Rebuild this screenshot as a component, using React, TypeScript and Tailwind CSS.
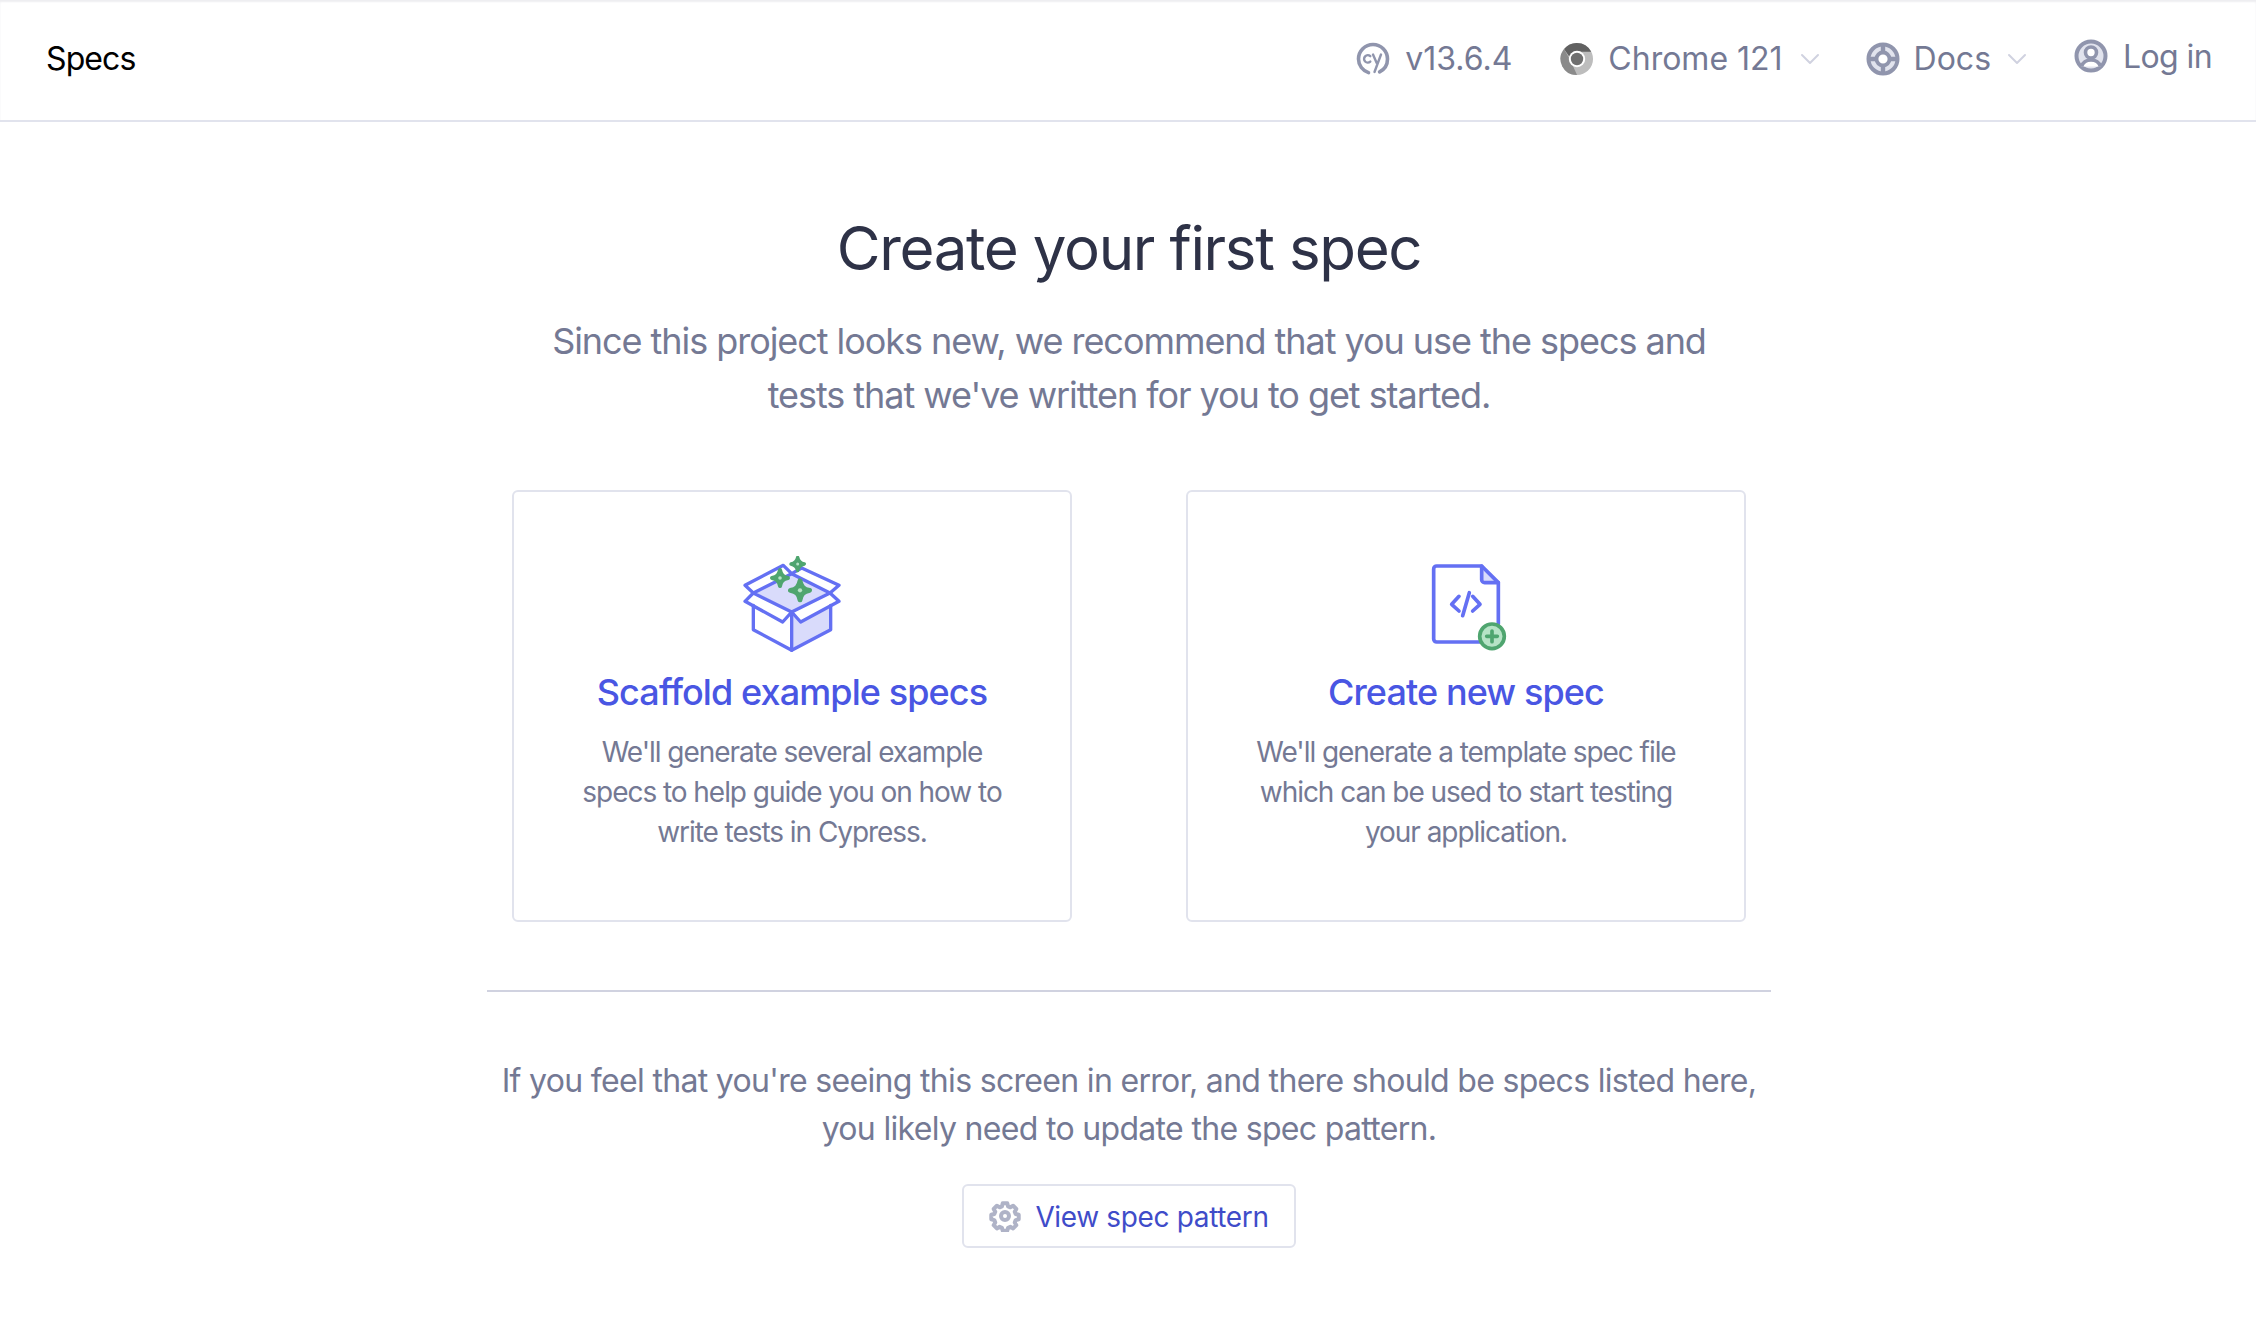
import React from 'react';
import { ChevronDown } from 'lucide-react';

const CypressIcon = () => (
  <svg width="34" height="34" viewBox="0 0 34 34" fill="none">
    <path d="M12.5 30.6C6.7 28.8 2.500 23.400 2.500 17 2.500 9 9 2.500 17 2.500S31.500 9 31.500 17c0 5.600-3.200 10.500-7.900 12.900" stroke="#9095ad" strokeWidth="3.600" strokeLinecap="round" />
    <path d="M14.300 14.200a3.700 3.700 0 1 0 0 5.400" stroke="#9095ad" strokeWidth="2.400" strokeLinecap="round" />
    <path d="M17 12.500l3.700 8.500M25 12.500l-6.500 17.500" stroke="#9095ad" strokeWidth="2.400" strokeLinecap="round" />
  </svg>
);

const ChromeIcon = () => (
  <svg width="34" height="34" viewBox="0 0 34 34">
    <circle cx="17" cy="17" r="16" fill="#bdbdbd" />
    <path d="M17 1a16 16 0 0 1 14.200 8.800H17a7.500 7.500 0 0 0-7.200 5.400L4 7a16 16 0 0 1 13-6z" fill="#616161" />
    <path d="M4 7l7 12.500L17 33A16 16 0 0 1 4 7z" fill="#8a8a8a" />
    <circle cx="17" cy="17" r="8.200" fill="#fff" />
    <circle cx="17" cy="17" r="6.200" fill="#6f6f6f" />
  </svg>
);

const DocsIcon = () => (
  <svg width="34" height="34" viewBox="0 0 34 34" fill="none">
    <circle cx="17" cy="17" r="14.500" fill="#e1e3ed" stroke="#9095ad" strokeWidth="4" />
    <path d="M17 2v30M2 17h30" stroke="#9095ad" strokeWidth="4.400" />
    <circle cx="17" cy="17" r="6.500" fill="#fff" stroke="#9095ad" strokeWidth="3.800" />
  </svg>
);

const UserIcon = () => (
  <svg width="34" height="34" viewBox="0 0 34 34" fill="none" className="-translate-y-[1px]">
    <circle cx="17" cy="17" r="14.500" fill="#e1e3ed" stroke="#9095ad" strokeWidth="4" />
    <circle cx="17" cy="13.500" r="5.500" fill="#fff" stroke="#9095ad" strokeWidth="3.600" />
    <path d="M7.500 27.500c1.500-4.500 5-6.500 9.500-6.500s8 2 9.500 6.500" fill="#fff" stroke="#9095ad" strokeWidth="3.600" />
  </svg>
);

const Sparkle = ({ x, y, r }: { x: number; y: number; r: number }) => (
  <g transform={`translate(${x} ${y}) scale(${r / 10})`}>
    <path d="M0-8C1-3 3-1 8 0 3 1 1 3 0 8-1 3-3 1-8 0-3-1-1-3 0-8z" fill="#4fa56f" stroke="#4fa56f" strokeWidth="4" strokeLinejoin="round" />
    <circle r="1.800" fill="#b6e3c6" stroke="none" />
  </g>
);

// coords are the 3x crop of the icon, hence the odd viewBox
const ScaffoldIcon = () => (
  <svg width="104" height="104" viewBox="120 77 312 312" fill="none" stroke="#6470f3" strokeWidth="10" strokeLinejoin="round" strokeLinecap="round">
    <path d="M165 185L275 130 385 185 275 243z" fill="#d9dbfb" stroke="none" />
    <path d="M275 245L300 275 392 228V298L275 360z" fill="#d9dbfb" stroke="none" />
    <path d="M160 225V298L275 360 392 298V225" />
    <path d="M275 245V360" />
    <path d="M160 188L135 213 248 275 275 245 302 275 417 213 390 188" />
    <path d="M160 188L275 130 390 188 275 245z" />
    <path d="M160 188L135 165 250 105 275 130 305 113 417 165 390 188" />
    <Sparkle x={240} y={143} r={30} />
    <Sparkle x={293} y={101} r={25} />
    <Sparkle x={300} y={180} r={36} />
  </svg>
);

const NewSpecIcon = () => (
  <svg width="104" height="104" viewBox="72 47 312 312" fill="none" stroke="#6470f3" strokeWidth="11" strokeLinejoin="round" strokeLinecap="round">
    <path d="M275 77V125H325z" fill="#d9dbfb" stroke="none" />
    <path d="M270 305H140A9 9 0 0 1 131 296V86A9 9 0 0 1 140 77H275L325 127V250" />
    <path d="M275 77V118A9 9 0 0 0 284 127H325" />
    <path d="M207 168L185 192 207 212M248 168L270 192 248 212M238 157L218 226" />
    <circle cx="306" cy="288" r="37" fill="#b6e3c6" stroke="#4fa56f" />
    <path d="M306 272V304M290 288H322" stroke="#4fa56f" />
  </svg>
);

const GearIcon = () => (
  <svg width="32" height="32" viewBox="0 0 24 24" fill="none" stroke="#afb3c7" strokeWidth="3" strokeLinejoin="round">
    <path d="M10.300 2.500h3.400l.6 2.300 1.700.7 2.100-1.200 2.400 2.400-1.200 2.100.7 1.700 2.300.6v3.400l-2.300.6-.7 1.700 1.200 2.100-2.400 2.400-2.100-1.200-1.700.7-.6 2.300h-3.400l-.6-2.300-1.700-.7-2.100 1.200-2.400-2.400 1.200-2.100-.7-1.700-2.300-.6v-3.400l2.300-.6.7-1.700-1.200-2.100 2.400-2.400 2.100 1.200 1.700-.7z" />
    <circle cx="12" cy="12" r="3" />
  </svg>
);

const Caret = () => <ChevronDown size={32} strokeWidth={1.5} className="text-[#d0d2e0] -mx-[4px]" />;

const Card = ({ icon, title, children }: { icon: React.ReactNode; title: string; children: React.ReactNode }) => (
  <div className="w-[560px] h-[432px] border-2 border-[#e1e3ed] rounded-[6px] flex flex-col items-center pt-[64px]">
    {icon}
    <h2 className="mt-[7px] text-[36px] leading-[50px] font-medium tracking-[-0.9px] text-[#4956e3]">{title}</h2>
    <p className="mt-[15px] w-[460px] text-center text-[28px] leading-[40px] tracking-[-1.05px] text-[#747994]">{children}</p>
  </div>
);

export default function App() {
  return (
    <div className="min-h-[1338px] bg-white font-['Inter',sans-serif]">
      <header className="h-[122px] border-b-2 border-[#e1e3ed] flex items-center justify-between pl-[46px] pr-[44px] shadow-[inset_0_2px_2px_#eeeef1]">
        <div className="text-[32px] tracking-[-0.9px] text-[#000] leading-none -translate-y-[1px]">Specs</div>
        <nav className="flex items-center text-[32px] text-[#747994] -translate-y-[1px]">
          <div className="flex items-center gap-[15px]">
            <CypressIcon />
            <span>v13.6.4</span>
          </div>
          <div className="flex items-center gap-[14px] ml-[48px]">
            <ChromeIcon />
            <span className="mr-[1px]">Chrome 121</span>
            <Caret />
          </div>
          <div className="flex items-center gap-[14px] ml-[44px]">
            <DocsIcon />
            <span>Docs</span>
            <Caret />
          </div>
          <div className="flex items-center gap-[15px] ml-[45px] -translate-y-[2px]">
            <UserIcon />
            <span className="tracking-[-0.6px]">Log in</span>
          </div>
        </nav>
      </header>
      <main className="flex flex-col items-center pl-[2px]">
        <h1 className="mt-[88px] text-[60px] leading-[76px] tracking-[-1.35px] text-[#2e3247]">Create your first spec</h1>
        <p className="mt-[28px] w-[1240px] text-center text-[36px] leading-[54px] tracking-[-1.05px] text-[#747994]">
          Since this project looks new, we recommend that you use the specs and<br />tests that we've written for you to get started.
        </p>
        <div className="mt-[68px] flex gap-[114px]">
          <Card icon={<ScaffoldIcon />} title="Scaffold example specs">
            We'll generate several example specs to help guide you on how to write tests in Cypress.
          </Card>
          <Card icon={<NewSpecIcon />} title="Create new spec">
            We'll generate a template spec file which can be used to start testing your application.
          </Card>
        </div>
        <div className="mt-[68px] w-[1284px] h-[2px] bg-[#d0d2e0]" />
        <p className="mt-[65px] text-center text-[32px] leading-[48px] tracking-[-0.68px] text-[#747994]">
          If you feel that you're seeing this screen in error, and there should be specs listed here,<br />you likely need to update the spec pattern.
        </p>
        <button className="mt-[31px] h-[64px] w-[334px] border-2 border-[#e1e3ed] rounded-[6px] flex items-center justify-center gap-[14px] text-[28px] tracking-[-0.35px] text-[#3f4cc9]">
          <GearIcon />
          <span className="pt-[2px]">View spec pattern</span>
        </button>
      </main>
    </div>
  );
}
